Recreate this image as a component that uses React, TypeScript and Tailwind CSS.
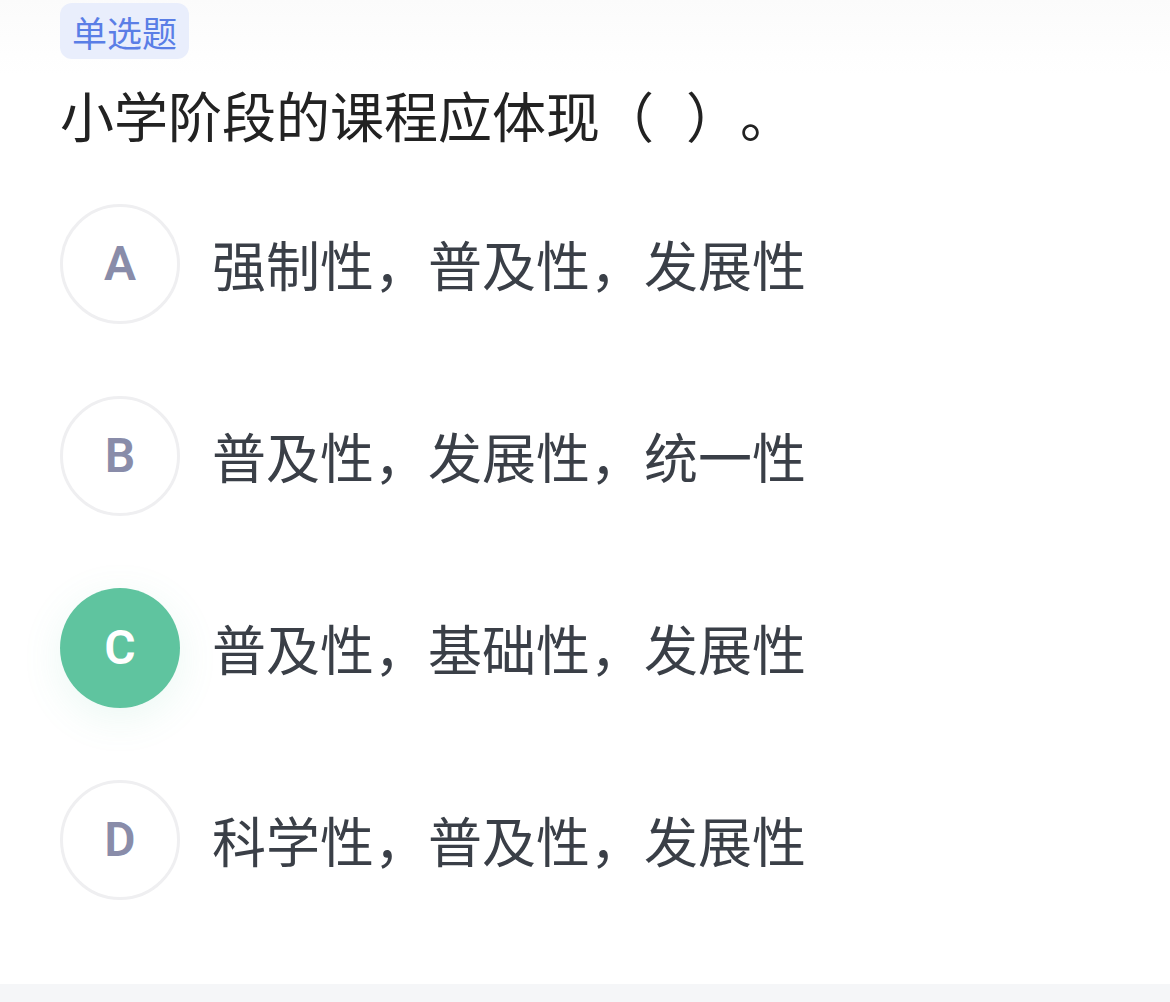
import React from "react";

const options = [
  { key: "A", text: "强制性，普及性，发展性", selected: false },
  { key: "B", text: "普及性，发展性，统一性", selected: false },
  { key: "C", text: "普及性，基础性，发展性", selected: true },
  { key: "D", text: "科学性，普及性，发展性", selected: false },
];

const cjk = { fontFamily: '"Noto Sans CJK SC", "Noto Sans", sans-serif' };
const latin = { fontFamily: 'Roboto, "Liberation Sans", "Noto Sans", sans-serif' };

export default function App() {
  return (
    <div
      className="w-[1170px] h-[1002px] bg-white flex flex-col overflow-hidden [text-spacing-trim:space-all]"
      style={cjk}
    >
      <div className="flex-1 px-[60px] pt-[3px] bg-[linear-gradient(to_bottom,#fbfbfb_0px,#ffffff_75px)]">
        <div className="inline-flex items-center h-[56px] px-[12px] rounded-[12px] bg-[#e9eefc] text-[35px] text-[#5a7ee6] leading-none">
          单选题
        </div>
        <div className="mt-[16px] h-[80px] flex items-center text-[54px] text-[#222222] leading-none whitespace-pre">
          小学阶段的课程应体现（<span className="inline-block w-[32px]" />）。
        </div>
        <div className="mt-[49px] flex flex-col gap-[72px]">
          {options.map((o) => (
            <div key={o.key} className="flex items-center h-[120px]">
              {o.selected ? (
                <div
                  className="w-[120px] h-[120px] rounded-full bg-[#5fc49f] flex items-center justify-center text-white text-[48px] font-semibold shadow-[0_10px_40px_rgba(94,196,158,0.12)]"
                  style={latin}
                >
                  {o.key}
                </div>
              ) : (
                <div
                  className="w-[120px] h-[120px] rounded-full border-[3px] border-[#efeff1] flex items-center justify-center text-[#898ca9] text-[48px] font-semibold"
                  style={latin}
                >
                  {o.key}
                </div>
              )}
              <div className="ml-[32px] text-[54px] text-[#3a3f47] leading-none">{o.text}</div>
            </div>
          ))}
        </div>
      </div>
      <div className="h-[18px] bg-[#f5f6f8]" />
    </div>
  );
}
